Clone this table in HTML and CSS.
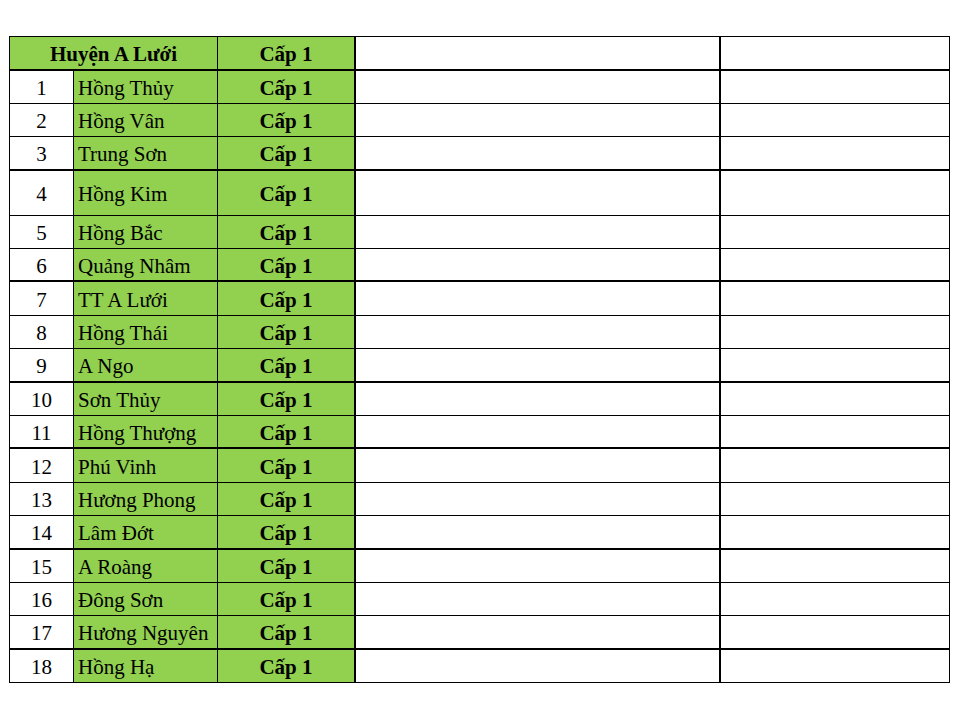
FILE: index.html
```html
<!DOCTYPE html>
<html lang="vi">
<head>
<meta charset="utf-8">
<title>Huyện A Lưới</title>
<link rel="stylesheet" href="styles.css">
</head>
<body>
<table class="sheet">
  <colgroup>
    <col class="c-no"><col class="c-name"><col class="c-level"><col class="c-e1"><col class="c-e2">
  </colgroup>
  <tr class="head thick">
    <td class="green bold center" colspan="2">Huyện A Lưới</td>
    <td class="green bold center sep">Cấp 1</td>
    <td class="sep"></td>
    <td></td>
  </tr>
  <tr><td class="center">1</td><td class="green">Hồng Thủy</td><td class="green bold center sep">Cấp 1</td><td class="sep"></td><td></td></tr>
  <tr><td class="center">2</td><td class="green">Hồng Vân</td><td class="green bold center sep">Cấp 1</td><td class="sep"></td><td></td></tr>
  <tr class="thick"><td class="center">3</td><td class="green">Trung Sơn</td><td class="green bold center sep">Cấp 1</td><td class="sep"></td><td></td></tr>
  <tr class="tall"><td class="center">4</td><td class="green">Hồng Kim</td><td class="green bold center sep">Cấp 1</td><td class="sep"></td><td></td></tr>
  <tr><td class="center">5</td><td class="green">Hồng Bắc</td><td class="green bold center sep">Cấp 1</td><td class="sep"></td><td></td></tr>
  <tr class="thick"><td class="center">6</td><td class="green">Quảng Nhâm</td><td class="green bold center sep">Cấp 1</td><td class="sep"></td><td></td></tr>
  <tr><td class="center">7</td><td class="green">TT A Lưới</td><td class="green bold center sep">Cấp 1</td><td class="sep"></td><td></td></tr>
  <tr><td class="center">8</td><td class="green">Hồng Thái</td><td class="green bold center sep">Cấp 1</td><td class="sep"></td><td></td></tr>
  <tr class="thick"><td class="center">9</td><td class="green">A Ngo</td><td class="green bold center sep">Cấp 1</td><td class="sep"></td><td></td></tr>
  <tr><td class="center">10</td><td class="green">Sơn Thủy</td><td class="green bold center sep">Cấp 1</td><td class="sep"></td><td></td></tr>
  <tr class="thick"><td class="center">11</td><td class="green">Hồng Thượng</td><td class="green bold center sep">Cấp 1</td><td class="sep"></td><td></td></tr>
  <tr><td class="center">12</td><td class="green">Phú Vinh</td><td class="green bold center sep">Cấp 1</td><td class="sep"></td><td></td></tr>
  <tr><td class="center">13</td><td class="green">Hương Phong</td><td class="green bold center sep">Cấp 1</td><td class="sep"></td><td></td></tr>
  <tr class="thick"><td class="center">14</td><td class="green">Lâm Đớt</td><td class="green bold center sep">Cấp 1</td><td class="sep"></td><td></td></tr>
  <tr><td class="center">15</td><td class="green">A Roàng</td><td class="green bold center sep">Cấp 1</td><td class="sep"></td><td></td></tr>
  <tr><td class="center">16</td><td class="green">Đông Sơn</td><td class="green bold center sep">Cấp 1</td><td class="sep"></td><td></td></tr>
  <tr class="thick"><td class="center">17</td><td class="green">Hương Nguyên</td><td class="green bold center sep">Cấp 1</td><td class="sep"></td><td></td></tr>
  <tr><td class="center">18</td><td class="green">Hồng Hạ</td><td class="green bold center sep">Cấp 1</td><td class="sep"></td><td></td></tr>
</table>
</body>
</html>
```

FILE: styles.css
```css
html, body {
  margin: 0;
  padding: 0;
  background: #ffffff;
}

body {
  font-family: "Liberation Serif", "Times New Roman", serif;
  font-size: 21px;
  color: #000000;
}

.sheet {
  margin: 36px 0 0 9px;
  border-collapse: separate;
  border-spacing: 0;
  table-layout: fixed;
  width: 940px;
  border-left: 1px solid #000;
}

.c-no { width: 64px; }
.c-name { width: 144px; }
.c-level { width: 138px; }
.c-e1 { width: 365px; }
.c-e2 { width: 229px; }

.sheet td {
  box-sizing: border-box;
  height: 33.4px;
  padding: 3px 0 0 4px;
  border-right: 1px solid #000;
  border-bottom: 1px solid #000;
  white-space: nowrap;
  overflow: hidden;
  vertical-align: middle;
  line-height: 1;
}

.sheet td.sep {
  border-right-width: 2px;
}

.sheet tr.thick td {
  border-bottom-width: 2px;
}

.sheet tr.head td {
  border-top: 1px solid #000;
  height: 34.5px;
}

.sheet tr.tall td {
  height: 45px;
}

.green {
  background: #92d050;
}

.bold {
  font-weight: bold;
}

.sheet td.center {
  text-align: center;
  padding-left: 0;
}
```
